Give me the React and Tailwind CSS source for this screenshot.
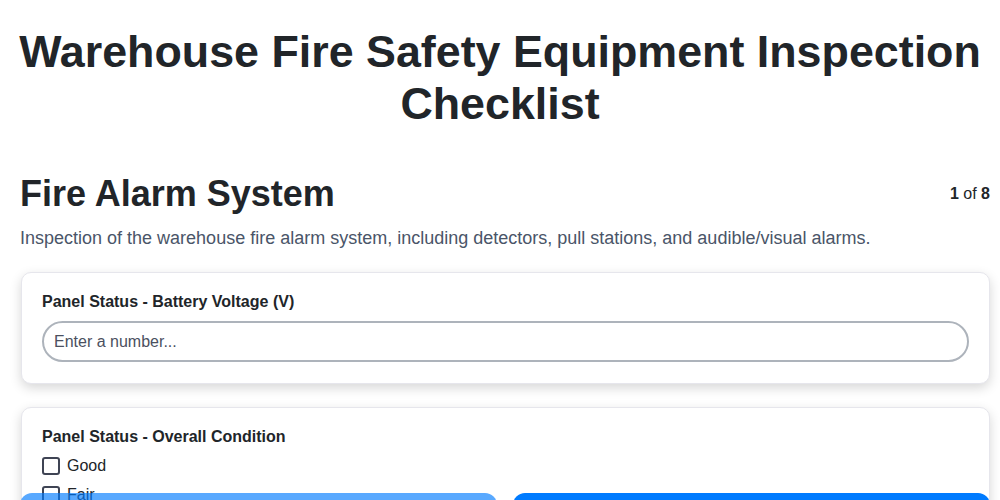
import React, { useState } from "react";

const options = ["Good", "Fair", "Poor", "Needs Repair"];

export default function App() {
  const [voltage, setVoltage] = useState("");
  const [checked, setChecked] = useState({});

  return (
    <div className="min-h-screen bg-white text-[#212529] font-['Liberation_Sans',Arial,sans-serif]">
      <h1 className="pt-[26px] text-center text-[44.8px] font-bold leading-[1.15]">
        Warehouse Fire Safety Equipment Inspection Checklist
      </h1>

      <div className="pl-5 pr-[10px] pt-[43px] pb-32">
        <div className="flex items-center justify-between">
          <h2 className="text-[36px] font-bold leading-[1.2]">Fire Alarm System</h2>
          <span className="text-base">
            <b>1</b> of <b>8</b>
          </span>
        </div>
        <p className="mt-[11px] text-[18px] leading-[1.4] text-[#4a5568]">
          Inspection of the warehouse fire alarm system, including detectors, pull stations, and audible/visual alarms.
        </p>

        <div className="mt-[21px] flex flex-col gap-[23px]">
          <div className="ml-px rounded-[10px] border border-[#e6e6ec] bg-white px-5 pt-5 pb-[21px] shadow-[0_4px_12px_rgba(0,0,0,0.16)]">
            <label className="mb-[10px] block text-base font-bold leading-[18px]">
              Panel Status - Battery Voltage (V)
            </label>
            <input
              type="number"
              value={voltage}
              onChange={(e) => setVoltage(e.target.value)}
              placeholder="Enter a number..."
              className="block h-[41px] w-full rounded-full border-2 border-[#adb3bb] bg-white px-[10px] text-base text-[#212529] placeholder:text-[#4b5060] outline-none"
            />
          </div>

          <div className="ml-px rounded-[10px] border border-[#e6e6ec] bg-white p-5 shadow-[0_4px_12px_rgba(0,0,0,0.16)]">
            <label className="mb-[11px] block text-base font-bold leading-[18px]">
              Panel Status - Overall Condition
            </label>
            <div className="flex flex-col gap-[11px]">
              {options.map((opt) => (
                <label key={opt} className="flex h-[18px] items-center gap-[7px] text-base">
                  <span
                    onClick={() => setChecked({ ...checked, [opt]: !checked[opt] })}
                    className={
                      checked[opt]
                        ? "h-[18px] w-[18px] rounded-[3px] border-2 border-[#007bff] bg-[#007bff]"
                        : "h-[18px] w-[18px] rounded-[3px] border-2 border-[#3f4454] bg-white"
                    }
                  />
                  {opt}
                </label>
              ))}
            </div>
          </div>
        </div>
      </div>

      <div className="fixed inset-x-0 top-[493px] flex gap-4 pl-5 pr-[10px]">
        <button className="h-12 flex-1 rounded-xl bg-[#007bff] text-base font-bold text-white opacity-65">
          Previous
        </button>
        <button className="h-12 flex-1 rounded-xl bg-[#007bff] text-base font-bold text-white">
          Next
        </button>
      </div>
    </div>
  );
}
